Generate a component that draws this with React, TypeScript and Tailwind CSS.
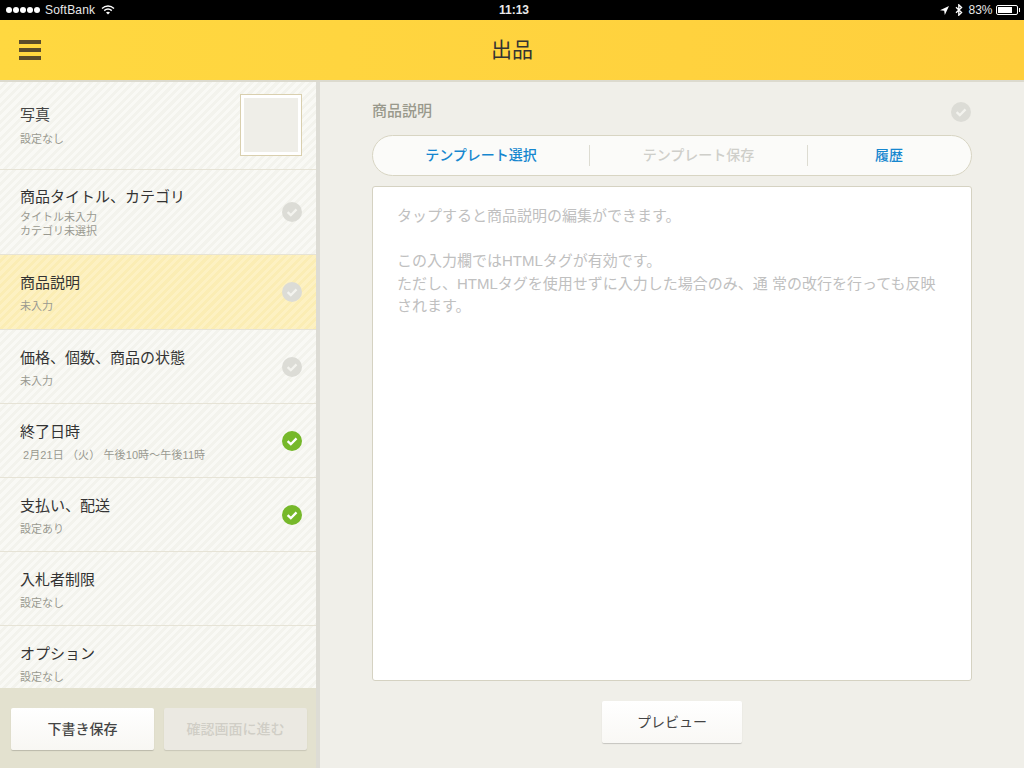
import React from "react";

const font = { fontFamily: '"Liberation Sans", "Noto Sans CJK JP", sans-serif' };
const stripes =
  "bg-[repeating-linear-gradient(135deg,#f9f9f5_0px,#f9f9f5_3px,#f3f3ed_3px,#f3f3ed_6px)]";
const yellowStripes =
  "bg-[repeating-linear-gradient(135deg,#fdf1c2_0px,#fdf1c2_3px,#fbedb4_3px,#fbedb4_6px)]";

function Check({ done = false, size = 20 }: { done?: boolean; size?: number }) {
  return (
    <svg width={size} height={size} viewBox="0 0 20 20" className="shrink-0">
      <circle cx="10" cy="10" r="10" fill={done ? "#76b82a" : "#dcdcd6"} />
      <path
        d="M5.6 10.2 L8.8 13.2 L14.5 7.4"
        fill="none"
        stroke={done ? "#ffffff" : "#f3f3ee"}
        strokeWidth="2.3"
      />
    </svg>
  );
}

function Row({
  title,
  sub,
  h,
  check,
  done,
  active,
  tight,
  indent,
}: {
  title: string;
  sub: string[];
  h: string;
  check?: boolean;
  done?: boolean;
  active?: boolean;
  tight?: boolean;
  indent?: boolean;
}) {
  return (
    <div
      className={`${h} shrink-0 flex justify-between pl-5 pr-[14px] border-b border-[#e6e3d6] ${
        active ? yellowStripes : stripes
      }`}
    >
      <div className={`flex flex-col ${tight ? "pt-4" : "pt-[17px]"}`}>
        <div className="text-[15px] leading-[22px] text-[#333333]">{title}</div>
        <div className={`${tight ? "mt-[2px]" : "mt-[5px]"} ${indent ? "pl-[3px] tracking-[0.1px]" : ""} text-[11px] leading-[14px] text-[#999990]`}>
          {sub.map((s) => (
            <div key={s}>{s}</div>
          ))}
        </div>
      </div>
      {check && (
        <div className="self-center">
          <Check done={done} />
        </div>
      )}
    </div>
  );
}

export default function App() {
  return (
    <div className="w-[1024px] h-[768px] overflow-hidden flex flex-col bg-[#f0efe9]" style={font}>
      <div className="h-5 shrink-0 bg-black text-[#e8e8e8] text-[12px] leading-5 flex items-center justify-between pl-[6px] pr-[4px] relative">
        <div className="flex items-center">
          <div className="flex gap-[1px] mr-[5px]">
            {[0, 1, 2, 3, 4].map((i) => (
              <span key={i} className="w-[6px] h-[6px] rounded-full bg-white" />
            ))}
          </div>
          <span className="tracking-[0.2px]">SoftBank</span>
          <svg width="14" height="10" viewBox="0 0 14 10" className="ml-[6px]">
            <path d="M1 3.4 C4.5 0.2 9.5 0.2 13 3.4" fill="none" stroke="#fff" strokeWidth="1.4" />
            <path d="M3.2 5.6 C5.4 3.7 8.6 3.7 10.8 5.6" fill="none" stroke="#fff" strokeWidth="1.4" />
            <path d="M5 7.4 L7 9.6 L9 7.4 C7.8 6.4 6.2 6.4 5 7.4 Z" fill="#fff" />
          </svg>
        </div>
        <div className="absolute left-[499px] top-0 text-[12px] font-bold">11:13</div>
        <div className="flex items-center">
          <svg width="9" height="9" viewBox="0 0 9 9" className="mr-[6px]">
            <path d="M9 0 L0 4.2 L4.2 4.8 L4.8 9 Z" fill="#fff" />
          </svg>
          <svg width="8" height="12" viewBox="0 0 8 12" className="mr-[5px]">
            <path d="M1 3.2 L6.6 8.6 L3.8 11.2 L3.8 0.8 L6.6 3.4 L1 8.8" fill="none" stroke="#fff" strokeWidth="1.3" />
          </svg>
          <span className="mr-[3px]">83%</span>
          <div className="w-[22px] h-[10px] border border-white rounded-[2px] p-[1px]">
            <div className="h-full w-[83%] bg-white" />
          </div>
          <div className="w-[1.5px] h-[4px] ml-[1px] bg-white" />
        </div>
      </div>

      <div className="h-[60px] shrink-0 bg-gradient-to-r from-[#ffd840] to-[#ffcf3d] flex items-center justify-center relative">
        <div className="absolute left-[19px] top-[20px] w-[22px] flex flex-col gap-[4px]">
          <div className="h-1 bg-[#5a4c2a]" />
          <div className="h-1 bg-[#5a4c2a]" />
          <div className="h-1 bg-[#5a4c2a]" />
        </div>
        <div className="text-[21px] text-[#333333] leading-[28px] -mt-[1px]">出品</div>
      </div>
      <div className="h-[2px] shrink-0 bg-[#dcdace]" />

      <div className="flex flex-1 min-h-0">
        <div className="w-[320px] shrink-0 flex flex-col border-r-4 border-[#dddcd5]">
          <div className="flex-1 min-h-0 overflow-hidden flex flex-col">
            <div className={`h-[88px] shrink-0 flex items-center justify-between pl-5 pr-[14px] border-b border-[#e6e3d6] ${stripes}`}>
              <div className="flex flex-col -mt-[1px]">
                <div className="text-[15px] leading-[22px] text-[#444444]">写真</div>
                <div className="mt-[6px] text-[11px] leading-[14px] text-[#999990]">設定なし</div>
              </div>
              <div className="w-[62px] h-[62px] mb-[1px] border border-[#d9cfae] bg-white p-[3px]">
                <div className="w-full h-full bg-[#efeee8]" />
              </div>
            </div>
            <Row h="h-[85px]" title="商品タイトル、カテゴリ" sub={["タイトル未入力", "カテゴリ未選択"]} check tight />
            <Row h="h-[75px]" title="商品説明" sub={["未入力"]} check active />
            <Row h="h-[74px]" title="価格、個数、商品の状態" sub={["未入力"]} check />
            <Row h="h-[74px]" title="終了日時" sub={["2月21日 （火） 午後10時〜午後11時"]} check done indent />
            <Row h="h-[74px]" title="支払い、配送" sub={["設定あり"]} check done />
            <Row h="h-[74px]" title="入札者制限" sub={["設定なし"]} />
            <Row h="h-[74px]" title="オプション" sub={["設定なし"]} />
          </div>
          <div className="h-20 shrink-0 bg-[#e3e1cf] flex gap-[10px] pl-[11px] pt-5">
            <div className="w-[143px] h-[42px] rounded-[2px] bg-gradient-to-b from-white to-[#f8f7f3] shadow-[0_1px_1px_rgba(0,0,0,0.18)] flex items-center justify-center text-[14px] font-medium text-[#444444]">
              下書き保存
            </div>
            <div className="w-[143px] h-[42px] rounded-[2px] bg-[#ebe9e2] shadow-[0_1px_1px_rgba(0,0,0,0.12)] flex items-center justify-center text-[14px] font-medium text-[#d0cec6]">
              確認画面に進む
            </div>
          </div>
        </div>

        <div className="flex-1 min-w-0 px-[52px] flex flex-col">
          <div className="h-[53px] shrink-0 flex items-center justify-between pr-[1px] pt-[6px]">
            <div className="text-[15px] font-medium text-[#99998c]">商品説明</div>
            <Check />
          </div>
          <div className="h-[41px] shrink-0 rounded-[21px] border border-[#d8d5c3] bg-[#fbfbf9] flex items-center text-[14px] font-medium pb-[1px]">
            <div className="w-[216px] text-center text-[#1687cf]">テンプレート選択</div>
            <div className="w-px h-[21px] bg-[#dddcd2]" />
            <div className="w-[217px] text-center text-[#cfcfca]">テンプレート保存</div>
            <div className="w-px h-[21px] bg-[#dddcd2]" />
            <div className="flex-1 text-center text-[#1687cf] pr-[1px]">履歴</div>
          </div>
          <div className="mt-[10px] h-[495px] shrink-0 rounded-[3px] border border-[#d5d2c2] bg-white pt-[18px] pl-[24px] pr-[26px] text-[15px] leading-[22.5px] text-[#c0c0c0]">
            <div>タップすると商品説明の編集ができます。</div>
            <div className="h-[22.5px]" />
            <div>この入力欄ではHTMLタグが有効です。</div>
            <div>ただし、HTMLタグを使用せずに入力した場合のみ、通 常の改行を行っても反映されます。</div>
          </div>
          <div className="mt-5 flex justify-center">
            <div className="w-[140px] h-[42px] rounded-[2px] bg-gradient-to-b from-white to-[#f9f8f5] shadow-[0_1px_1px_rgba(0,0,0,0.18)] flex items-center justify-center text-[14px] text-[#444444]">
              プレビュー
            </div>
          </div>
        </div>
      </div>
    </div>
  );
}
